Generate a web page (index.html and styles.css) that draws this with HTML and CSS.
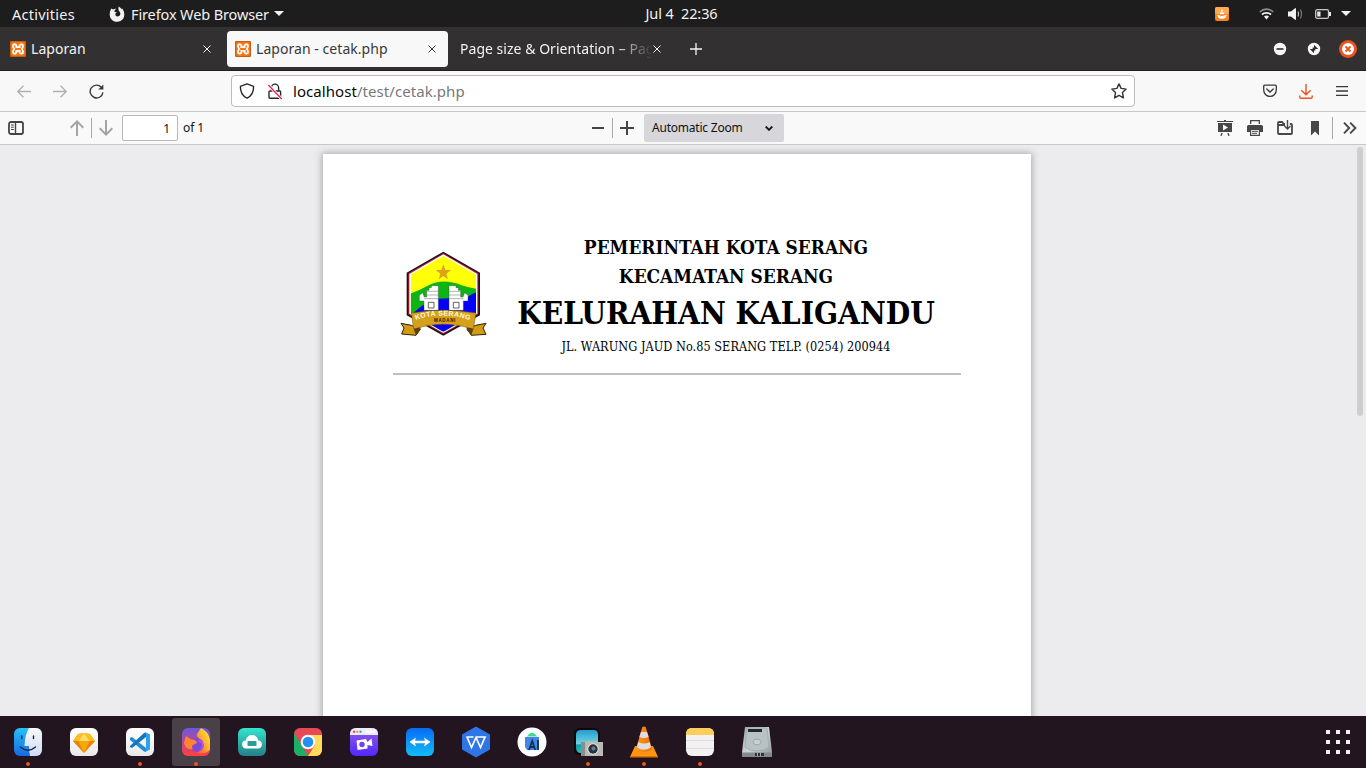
FILE: index.html
```html
<!DOCTYPE html>
<html lang="en">
<head>
<meta charset="utf-8">
<title>Laporan - cetak.php</title>
<link rel="stylesheet" href="styles.css">
</head>
<body>
<svg class="defs" width="0" height="0">
  <defs>
    <symbol id="xampp" viewBox="0 0 16 16"><rect width="16" height="16" rx="1" fill="#c9600f"/><rect x="1" y="1" width="14" height="14" rx="2" fill="#fb7410"/><path d="M3.2 3.9Q5.3 2.4 6.4 4.4L6.3 6.2H9.7L9.6 4.4Q10.7 2.4 12.8 3.9 13.6 6 11.8 8 13.6 10 12.8 12.1 10.7 13.6 9.6 11.6L9.7 9.8H6.3L6.4 11.6Q5.3 13.6 3.2 12.1 2.4 10 4.2 8 2.4 6 3.2 3.9Z" fill="none" stroke="#fff" stroke-width="1.8"/></symbol>
    <symbol id="close" viewBox="0 0 8 8"><path d="M.5.5 7.5 7.5M7.5.5.5 7.5" stroke="currentColor" stroke-width="1"/></symbol>
    <symbol id="caret" viewBox="0 0 10 5"><path d="M0 0H10L5 5Z" fill="#f2f2f2"/></symbol>
    <linearGradient id="finder" x1="0" y1="0" x2="0" y2="1"><stop stop-color="#27c0f7"/><stop offset="1" stop-color="#1769e2"/></linearGradient>
    <linearGradient id="finderLight" x1="0" y1="0" x2="0" y2="1"><stop stop-color="#f7f9fc"/><stop offset="1" stop-color="#cfdcf3"/></linearGradient>
    <linearGradient id="paper" x1="0" y1="0" x2="0" y2="1"><stop stop-color="#fff"/><stop offset="1" stop-color="#e9e9ea"/></linearGradient>
    <linearGradient id="fox" x1="0" y1="0" x2="0" y2="1"><stop stop-color="#6b59dc"/><stop offset=".55" stop-color="#bd4891"/><stop offset="1" stop-color="#ff403c"/></linearGradient>
    <linearGradient id="flame" x1="1" y1="0" x2="0" y2="1"><stop stop-color="#fff04a"/><stop offset=".45" stop-color="#ffb52f"/><stop offset="1" stop-color="#ff423d"/></linearGradient>
    <linearGradient id="teal" x1="0" y1="0" x2="0" y2="1"><stop stop-color="#34e5ce"/><stop offset="1" stop-color="#247f88"/></linearGradient>
    <linearGradient id="violet" x1="0" y1="0" x2="0" y2="1"><stop stop-color="#925be4"/><stop offset="1" stop-color="#5229ff"/></linearGradient>
    <linearGradient id="azure" x1="0" y1="0" x2="0" y2="1"><stop stop-color="#086bf5"/><stop offset="1" stop-color="#11bdf5"/></linearGradient>
    <linearGradient id="sea" x1="0" y1="0" x2="0" y2="1"><stop stop-color="#239dd2"/><stop offset=".6" stop-color="#70d3e3"/><stop offset=".65" stop-color="#119ba8"/><stop offset="1" stop-color="#35c0b4"/></linearGradient>
    <linearGradient id="cone" x1="0" y1="0" x2="1" y2="0"><stop stop-color="#ff9a1e"/><stop offset="1" stop-color="#ee6900"/></linearGradient>
    <linearGradient id="steel" x1="0" y1="0" x2="1" y2="1"><stop stop-color="#9ca7aa"/><stop offset=".5" stop-color="#cbd3d5"/><stop offset="1" stop-color="#8c9799"/></linearGradient>
    <clipPath id="round"><rect width="28" height="28" rx="6"/></clipPath>
  </defs>
</svg>

<header class="topbar">
  <div class="top-left">
    <span class="t activities">Activities</span>
    <svg class="fox-mono" width="16" height="16" viewBox="0 0 16 16"><path d="M2.3 2.5 4 3.6C5.1 2.8 6.3 2.7 7.2 2.9 5.7 3.7 5.2 5 5.6 6.1L7.8 6.3 6.3 7.7C6.2 9.5 7.2 10.6 8.8 10.4 11.5 10 12 7.3 10.5 5.5 9.5 4.4 9 3 9.8.3 10.7 1.7 12 2.1 13 3.4L13.2 2.3C18 9.5 14 15.8 8.2 15.8 1.3 15.8-1.3 8.7 2.3 2.5Z" fill="#f2f2f2"/></svg>
    <span class="t appname">Firefox Web Browser</span>
    <svg width="10" height="5"><use href="#caret"/></svg>
  </div>
  <div class="t clock">Jul 4&nbsp; 22:36</div>
  <div class="top-right">
    <svg class="tray" width="14" height="14" viewBox="0 0 14 14"><rect width="14" height="14" rx="2" fill="#f58320"/><rect width="14" height="7" rx="2" fill="#ffab54"/><path d="M6.5 2.5H7.5L8.1 4.3H5.9ZM5.4 5.2H8.6L9.2 7.2H4.8Z" fill="#fff"/><path d="M2.7 8.4Q3 11.3 7 11.3T11.3 8.4Q7 11 2.7 8.4Z" fill="#fff" stroke="#fff"/></svg>
    <svg class="wifi" width="15" height="12" viewBox="0 0 15 12" fill="none"><path d="M.8 4C4.5.2 10.5.2 14.2 4" stroke="#8a8a8a" stroke-width="1.6"/><path d="M3 6.5C5.5 4.2 9.5 4.2 12 6.5" stroke="#f2f2f2" stroke-width="1.8"/><path d="M5 8.5C6.4 7.2 8.6 7.2 10 8.5L7.5 11.5Z" fill="#f2f2f2"/></svg>
    <svg class="sound" width="15" height="12" viewBox="0 0 15 12" fill="none"><path d="M0 3.5H3L7 .3H8V11.7H7L3 8.5H0Z" fill="#f2f2f2"/><path d="M10 3.5Q11.2 6 10 8.5" stroke="#bbb" stroke-width="1.2"/><path d="M12.4 1.5Q14.6 6 12.4 10.5" stroke="#777" stroke-width="1.2"/></svg>
    <svg class="battery" width="16" height="10" viewBox="0 0 16 10"><rect x=".7" y=".7" width="12.8" height="8.6" rx="1.5" fill="none" stroke="#c9c9c9" stroke-width="1.3"/><path d="M14 3H16V7H14ZM2.2 2.5H5.5V7.5H2.2Z" fill="#e9e9e9"/></svg>
    <svg width="10" height="5"><use href="#caret"/></svg>
  </div>
</header>

<nav class="tabs">
  <div class="tab first"><svg width="16" height="16"><use href="#xampp"/></svg><span class="t title">Laporan</span><svg class="x" width="8" height="8"><use href="#close"/></svg></div>
  <div class="tab active"><svg width="16" height="16"><use href="#xampp"/></svg><span class="t title">Laporan - cetak.php</span><svg class="x" width="8" height="8"><use href="#close"/></svg></div>
  <div class="tab third"><span class="t title">Page size &amp; Orientation – Pag</span><svg class="x" width="8" height="8"><use href="#close"/></svg></div>
  <svg class="newtab" width="12" height="12" viewBox="0 0 12 12"><path d="M6 0V12M0 6H12" stroke="#f5f5f5" stroke-width="1.3"/></svg>
  <div class="window">
    <svg width="18" height="18" viewBox="0 0 18 18"><circle cx="9" cy="9" r="6.2" fill="#f8f8f8"/><path d="M5.5 9H12.5" stroke="#444" stroke-width="1.8"/></svg>
    <svg width="18" height="18" viewBox="0 0 18 18"><circle cx="9" cy="9" r="6.2" fill="#f8f8f8"/><path d="M9 4.8 13.2 9H9ZM4.8 9H9V13.2ZM7.6 7.6H10.4V10.4H7.6Z" fill="#323031"/></svg>
    <svg width="18" height="18" viewBox="0 0 18 18"><circle cx="9" cy="9" r="9" fill="#e95420"/><circle cx="9" cy="9" r="6" fill="#fff"/><path d="M6.5 6.5 11.5 11.5M11.5 6.5 6.5 11.5" stroke="#e95420" stroke-width="1.8"/></svg>
  </div>
</nav>

<div class="navbar">
  <svg class="back" width="14" height="13" viewBox="0 0 14 13" fill="none" stroke="#b0b0b2" stroke-width="1.3"><path d="M14 6.5H.8M6.5.7.7 6.5 6.5 12.3"/></svg>
  <svg class="forward" width="14" height="13" viewBox="0 0 14 13" fill="none" stroke="#b0b0b2" stroke-width="1.3"><path d="M0 6.5H13.2M7.5.7 13.3 6.5 7.5 12.3"/></svg>
  <svg class="reload" width="15" height="15" viewBox="0 0 15 15"><path d="M12.3 3.2A6.4 6.4 0 1 0 13.9 8.3" fill="none" stroke="#38383b" stroke-width="1.4"/><path d="M14.4.5V5.5H9.3Z" fill="#38383b"/></svg>
  <div class="urlbox">
    <svg width="16" height="16" viewBox="0 0 16 16"><path d="M8 .8 14.6 3.3C14.8 9.2 12.8 12.9 8 15.2 3.2 12.9 1.2 9.2 1.4 3.3Z" fill="none" stroke="#28282b" stroke-width="1.4" stroke-linejoin="round"/></svg>
    <svg class="lock" width="16" height="17" viewBox="0 0 16 17" fill="none"><path d="M4.4 8V4.7A3.6 3.6 0 0 1 11.6 4.7V8M3 8H13Q13.6 8 13.6 9V14.3Q13.6 15.3 12.8 15.3H3Q2 15.3 2 14.3V9Q2 8 3 8Z" stroke="#28282b" stroke-width="1.4"/><path d="M1.3 2 14.7 16" stroke="#fff" stroke-width="3"/><path d="M1.3 2 14.7 16" stroke="#e22850" stroke-width="1.3"/></svg>
    <span class="t url"><b>localhost</b>/test/cetak.php</span>
    <svg class="star" width="16" height="16" viewBox="0 0 16 16"><path d="M8 .9 10.1 5.4 15.1 6.1 11.5 9.6 12.4 14.9 8 12.4 3.6 14.9 4.5 9.6.9 6.1 5.9 5.4Z" fill="none" stroke="#333" stroke-width="1.4" stroke-linejoin="round"/></svg>
  </div>
  <svg class="pocket" width="14" height="14" viewBox="0 0 14 14" fill="none" stroke="#38383b" stroke-width="1.3" stroke-linecap="round"><path d="M1.8 1.2H12.2Q13.3 1.2 13.3 2.3V5.7C13.3 14.6.7 14.6.7 5.7V2.3Q.7 1.2 1.8 1.2Z"/><path d="M3.8 5 7 8 10.2 5"/></svg>
  <svg class="download" width="14" height="15" viewBox="0 0 14 15" fill="none" stroke="#e95420" stroke-width="1.4"><path d="M7 0V10.5M2.3 6.2 7 10.8 11.7 6.2M.8 11.5V13Q.8 14.2 2 14.2H12Q13.2 14.2 13.2 13V11.5"/></svg>
  <svg class="menu" width="12" height="10" viewBox="0 0 12 10"><path d="M0 .5H12M0 5H12M0 9.5H12" stroke="#38383b" stroke-width="1.3"/></svg>
</div>

<div class="pdfbar">
  <div class="pdf-left">
    <svg width="16" height="14" viewBox="0 0 16 14" fill="none" stroke="#444"><rect x="1" y="1" width="14" height="12" rx="2" stroke-width="1.8"/><path d="M7.5 1V13" stroke-width="1.4"/><path d="M3 4H5.8M3 6.2H5.8M3 8.5H5.8" stroke-width="1"/></svg>
    <svg class="up" width="14" height="16" viewBox="0 0 14 16" fill="none" stroke="#a4a4a5" stroke-width="2"><path d="M7 16V2M.7 7.7 7 1.4 13.3 7.7"/></svg>
    <i class="sep"></i>
    <svg class="down" width="14" height="16" viewBox="0 0 14 16" fill="none" stroke="#a4a4a5" stroke-width="2"><path d="M7 0V14M.7 8.3 7 14.6 13.3 8.3"/></svg>
    <div class="t pagebox">1</div>
    <span class="t of">of 1</span>
  </div>
  <div class="pdf-mid">
    <svg width="12" height="2"><rect width="12" height="2" fill="#444"/></svg>
    <i class="sep"></i>
    <svg width="14" height="14" viewBox="0 0 14 14"><path d="M7 0V14M0 7H14" stroke="#444" stroke-width="2"/></svg>
    <div class="t select"><span class="zoomtext">Automatic Zoom</span><svg width="8" height="5" viewBox="0 0 8 5"><path d="M.7.5 4 3.8 7.3.5" fill="none" stroke="#151518" stroke-width="1.9"/></svg></div>
  </div>
  <div class="pdf-right">
    <svg width="16" height="16" viewBox="0 0 16 16" fill="#474747"><path d="M0 1H7V0H9V1H16V2H0ZM1 3H15V12H1Z"/><path d="M6 4.5V10.5L11 7.5Z" fill="#f9f9fa"/><path d="M5 13 4 16M11 13 12 16" stroke="#474747" stroke-width="1.3"/></svg>
    <svg width="16" height="16" viewBox="0 0 16 16" fill="#474747"><path d="M3 0H13V4H3ZM1.5 5H14.5Q16 5 16 6.5V12H0V6.5Q0 5 1.5 5ZM3 9H13V16H3Z"/><path d="M4.3 1.3H11.7V5H4.3ZM4.2 10H11.8V14.7H4.2Z" fill="#f9f9fa"/><path d="M5 11.3H11M5 13.3H10" stroke="#474747"/></svg>
    <svg width="16" height="16" viewBox="0 0 16 16" fill="none" stroke="#474747"><path d="M8 4H6.8L5 2H2Q1 2 1 3V13Q1 14 2 14H14Q15 14 15 13V5Q15 4 14 4H12.8M1 5H8" stroke-width="1.8"/><path d="M10.5 0V9M7.5 6 10.5 9 13.5 6" stroke-width="1.4"/></svg>
    <svg width="16" height="16" viewBox="0 0 16 16"><path d="M4 1H12V15.5L8 11.5 4 15.5Z" fill="#474747"/></svg>
    <i class="sep"></i>
    <svg class="more" width="14" height="12" viewBox="0 0 14 12"><path d="M1 .7 6.2 6 1 11.3M7.2.7 12.4 6 7.2 11.3" fill="none" stroke="#474747" stroke-width="1.9"/></svg>
  </div>
</div>

<main class="viewer">
  <article class="page">
    <div class="letterhead">
      <svg class="emblem" width="88" height="86" viewBox="30 33 264 258">
        <defs><clipPath id="hex"><path d="M160 48 258 104V219L160 275 62 219V104Z"/></clipPath><path id="arc" d="M77 240Q160 212 246 243"/></defs>
        <path d="M160 35 270 98V226L160 287 50 226V98Z" fill="#17131e"/>
        <path d="M160 40 265 100V223L160 282 55 223V100Z" fill="#c51a30"/>
        <path d="M160 43 262 102V221L160 279 58 221V102Z" fill="#fff"/>
        <g clip-path="url(#hex)"><path d="M50 40H270V290H50Z" fill="#ffff08"/><path d="M50 164Q85 154 110 139Q155 112 215 136Q240 145 270 147V290H50Z" fill="#0cb414"/><path d="M60 232Q90 190 145 176Q200 172 225 180Q240 160 270 155V290H50Z" fill="#0500fa"/></g>
        <path d="M160 73 166 90H183L169 101 174 118 160 108 146 118 151 101 137 90H154Z" fill="#daa21d"/>
        <g fill="#fff" stroke="#444" stroke-width="1.2"><path d="M124 137H145V211H102V183H88V166L98 158 103 171H110V151H117V143H124Z"/><path d="M198 137H177V211H220V183H234V166L224 158 219 171H212V151H205V143H198Z"/></g>
        <path d="M112 154H145M108 165H145M102 176H145M177 154H210M177 165H214M177 176H220" stroke="#666" stroke-width="1.5"/>
        <path d="M115 187H132V204H115ZM190 187H207V204H190Z" fill="#fff" stroke="#444" stroke-width="2.5"/>
        <path d="M64 256 33 250 42 264 35 282 78 286 91 267ZM257 256 288 250 279 264 288 283 244 286 232 267Z" fill="#d29b12" stroke="#282008" stroke-width="3"/>
        <path d="M64 219Q160 202 258 219L250 267Q160 238 71 267Z" fill="#d5a01a" stroke="#6b4e0a" stroke-width="1.5"/>
        <path d="M71 267 91 262V270L78 286ZM250 267 230 262V270L244 286Z" fill="#5c410b"/>
        <text class="motto"><textPath href="#arc" textLength="165">KOTA SERANG</textPath></text>
        <text class="madani" x="132" y="246" textLength="64">MADANI</text>
      </svg>
      <div class="heading">
        <div class="h1">PEMERINTAH KOTA SERANG</div>
        <div class="h2">KECAMATAN SERANG</div>
        <div class="h3">KELURAHAN KALIGANDU</div>
        <div class="addr">JL. WARUNG JAUD No.85 SERANG TELP. (0254) 200944</div>
      </div>
    </div>
  </article>
  <i class="scroll"></i>
</main>

<footer class="dock">
  <div class="cell run"><svg width="28" height="28" viewBox="0 0 28 28"><g clip-path="url(#round)"><path d="M0 0H28V28H0Z" fill="url(#finder)"/><path d="M15 0H28V28H16Q15 22 15 18H10.5Q11 6 15 0Z" fill="url(#finderLight)"/></g><path d="M7.7 8V10.5M19.5 8V10.5M6.3 19Q14 25.5 21.5 19" fill="none" stroke="#14253d" stroke-width="1.4" stroke-linecap="round"/></svg></div>
  <div class="cell"><svg width="28" height="28" viewBox="0 0 28 28"><rect width="28" height="28" rx="6" fill="url(#paper)"/><path d="M8 6 14 5 20 6 25 13 14 25 3 13Z" fill="#f8a900"/><path d="M8 6 14 5 8.5 13H3ZM20 6 14 5 19.5 13H25Z" fill="#fdbd1d"/><path d="M14 5 19.5 13H8.5Z" fill="#fddb68"/><path d="M3 13H8.5L14 25ZM25 13H19.5L14 25Z" fill="#e98410"/></svg></div>
  <div class="cell run"><svg width="28" height="28" viewBox="0 0 28 28"><rect width="28" height="28" rx="6" fill="url(#paper)"/><path d="M4 10 6 9 20 20V24L18 23.5 4 12Z" fill="#2489d0"/><path d="M4 18 18 5 20 4.5V9L6 20 4 19Z" fill="#1474bd"/><path d="M19 4 24 6.5V21.5L19 24Q20 22 20 20V8Q20 6 19 4Z" fill="#2fa2ef"/></svg></div>
  <div class="cell run current"><svg width="28" height="28" viewBox="0 0 28 28"><g clip-path="url(#round)"><path d="M0 0H28V28H0Z" fill="url(#fox)"/><path d="M19 0Q27 4 28 12V22Q22 27 14 25 22 20 19 12 14 9 15 6Z" fill="url(#flame)"/><circle cx="15" cy="17" r="6.8" fill="#7f46dc"/><path d="M2 15 4 8 9 11.5Q14 11 15 15L11 17Q9 18 11 21 6 22 3 18Z" fill="#ff862e"/><path d="M14 14Q18 12 20 16 21 20 16 23 23 21 21 14 18 10 14 14Z" fill="#b555f0"/></g></svg></div>
  <div class="cell"><svg width="28" height="28" viewBox="0 0 28 28"><rect width="28" height="28" rx="6" fill="url(#teal)"/><path d="M8.5 20.5A4 4 0 0 1 7.8 12.5Q9 7 14 7T20.2 12.5A4 4 0 0 1 19.5 20.5Z" fill="#fff"/><rect x="9.5" y="13" width="9" height="5" rx=".8" fill="#2d9b9c"/></svg></div>
  <div class="cell"><svg width="28" height="28" viewBox="0 0 28 28"><g clip-path="url(#round)"><path d="M0 0H28V28H0Z" fill="#e94856"/><path d="M0 5 8 18 14 28H0Z" fill="#1caf66"/><path d="M14 7H28V28H14L21 17Z" fill="#ffdb58"/></g><circle cx="14" cy="14" r="7.3" fill="#fff"/><circle cx="14" cy="14" r="5.3" fill="#2491ee"/></svg></div>
  <div class="cell"><svg width="28" height="28" viewBox="0 0 28 28"><rect width="28" height="28" rx="6" fill="url(#violet)"/><path d="M0 7V6Q0 0 6 0H22Q28 0 28 6V7Z" fill="#eceafb"/><g><circle cx="4" cy="3.8" r="1.2" fill="#ed4b65"/><circle cx="7.2" cy="3.8" r="1.2" fill="#eca43d"/><circle cx="10.5" cy="3.8" r="1.2" fill="#35bd91"/></g><rect x="15" y="2.5" width="10" height="2.5" rx="1" fill="#fff"/><path d="M6.5 12.5 16 11 17.5 14 21.5 10.5 22.5 18 17.5 17 17.5 20.5 7.5 22Z" fill="#fff"/><circle cx="12" cy="16.5" r="2.7" fill="#7040e8"/></svg></div>
  <div class="cell"><svg width="28" height="28" viewBox="0 0 28 28"><rect width="28" height="28" rx="6" fill="url(#azure)"/><path d="M3.5 14 10 9.5 9 12.8H19L18 9.5 24.5 14 18 18.5 19 15.2H9L10 18.5Z" fill="#fff"/></svg></div>
  <div class="cell"><svg width="28" height="32" viewBox="0 0 28 32"><path d="M14 .5 28 8.5V23.5L14 31.5 0 23.5V8.5Z" fill="#2e75e8"/><path d="M4.3 11H11.5M5 11 9.5 21.5 14 11.5 18.5 21.5 23 11H14" fill="none" stroke="#fff" stroke-width="1.7"/></svg></div>
  <div class="cell"><svg width="30" height="30" viewBox="0 0 30 30"><circle cx="15" cy="15" r="14.5" fill="#fff"/><path d="M8 10H22V23H10L8 20Z" fill="#4285ec"/><path d="M10 9.5Q15 2 20 9.5Z" fill="#3ddc84"/><path d="M12 23 15.2 14 18.2 23M13 20H17.5M21 13V23" fill="none" stroke="#123348" stroke-width="1.8"/></svg></div>
  <div class="cell run"><svg width="30" height="28" viewBox="0 0 30 28"><rect x="1" width="26" height="27" rx="6" fill="#07090c"/><path d="M3 7Q3 2 8 2H21Q25 2 25 7V25H8Q3 25 3 19Z" fill="url(#sea)"/><path d="M8 14H13L14 13H24L25 14H30V28H8Z" fill="#b9b9b6"/><path d="M8 14H12V28H8Z" fill="#888d8e"/><circle cx="20" cy="21" r="5.7" fill="#e4e4df"/><circle cx="20" cy="21" r="4.7" fill="#27343f"/><circle cx="20.5" cy="20.5" r="2" fill="#657e95"/></svg></div>
  <div class="cell run"><svg width="28" height="32" viewBox="0 0 28 32"><path d="M5 20H23L28 31H0Z" fill="#ff9413"/><path d="M0 30H28V31.5H0Z" fill="#d97400"/><path d="M12.3 1Q14 0 15.7 1L22 23Q14 29 6 23Z" fill="url(#cone)"/><path d="M11 6H17L18.7 11Q14 13 9.3 11ZM8.3 16Q14 19 19.7 16L21 21.5Q14 26 7 21.5Z" fill="#dedede"/></svg></div>
  <div class="cell run"><svg width="28" height="28" viewBox="0 0 28 28"><rect width="28" height="28" rx="6" fill="#f3f1f2"/><path d="M0 7V6Q0 0 6 0H22Q28 0 28 6V7Z" fill="#fbcf59"/><path d="M0 12.5H28M0 20.5H28" stroke="#dddcdd"/></svg></div>
  <div class="cell"><svg class="disk" width="30" height="30" viewBox="0 0 30 30"><path d="M3 0H27L30 25V30H0V25Z" fill="url(#steel)"/><path d="M5 1H25L27 20Q23 24 15 24T3 20Z" fill="#b8c2c5" stroke="#a3adb0"/><path d="M6 2H20V5H6Z" fill="#20292e"/><ellipse cx="15" cy="15" rx="4" ry="2.8" fill="#c8d0d2" stroke="#a0aaad"/><path d="M0 25.5H30V30H0Z" fill="#858b8d"/><path d="M13 26H22V29H13Z" fill="#333"/><path d="M15 26H16V29H15ZM18 26H19V29H18Z" fill="#aaa"/></svg></div>
  <div class="apps"><i></i><i></i><i></i><i></i><i></i><i></i><i></i><i></i><i></i></div>
</footer>
</body>
</html>
```
FILE: styles.css
```css
* { box-sizing: border-box; }
body { margin: 0; width: 1366px; height: 768px; overflow: hidden; display: flex; flex-direction: column; font-family: "Noto Sans", "Open Sans", sans-serif; font-size: 14px; background: #ececee; }
svg { display: block; flex: none; }
.defs { position: absolute; }
.t { white-space: nowrap; line-height: 20px; flex: none; }
.topbar { height: 27px; background: #1d1d1d; color: #f2f2f2; display: grid; grid-template-columns: 1fr auto 1fr; align-items: center; padding: 0 15px 0 12px; }
.top-left, .top-right { display: flex; align-items: center; }
.top-right { justify-content: flex-end; }
.activities { width: 97px; font-size: 14.5px; letter-spacing: .25px; }
.appname { width: 143px; margin-left: 6px; font-size: 14.5px; letter-spacing: -.12px; }
.clock { font-size: 14.5px; letter-spacing: -.1px; padding: 0 0 2px; }
.wifi { margin-left: 30px; }
.sound { margin-left: 14px; }
.battery { margin: 0 10px 0 12px; }
.tabs { height: 44px; background: #323031; border-bottom: 1px solid #1e1c1d; color: #f2f2f2; display: flex; align-items: center; padding-right: 9px; }
.tab { display: flex; align-items: center; height: 36px; padding: 0 12px 0 8px; }
.tab .title { flex: 1; margin-left: 5px; padding-top: 1px; min-width: 0; letter-spacing: .05px; }
.first { width: 225px; margin-left: 2px; padding-right: 16px; }
.active { width: 221px; background: #f8f8f8; color: #38383b; border-radius: 4px; }
.third { width: 225px; }
.third .title { margin-left: 4px; letter-spacing: .03px; -webkit-mask-image: linear-gradient(90deg, #000 80%, transparent); mask-image: linear-gradient(90deg, #000 80%, transparent); }
.newtab { margin-left: 17px; }
.window { display: flex; gap: 16px; margin-left: auto; }
.navbar { height: 41px; background: #f8f8f8; border-bottom: 1px solid #c8c8c9; display: flex; align-items: center; padding: 0 18px 0 17px; }
.forward { margin-left: 22px; }
.reload { margin-left: 22px; }
.urlbox { width: 904px; height: 32px; margin-left: 127px; border: 1px solid #bcbcbd; border-radius: 4px; background: #fff; display: flex; align-items: center; padding: 0 7px; }
.lock { margin-left: 12px; }
.url { margin-left: 10px; color: #78787b; font-size: 15px; letter-spacing: .06px; }
.url b { font-weight: 400; color: #08080a; }
.star { margin-left: auto; }
.pocket { margin-left: auto; }
.download { margin-left: 22px; }
.menu { margin-left: 23px; }
.pdfbar { height: 33px; background: #f9f9fa; border-bottom: 1px solid #c8c8c9; display: grid; grid-template-columns: 591px 193px 1fr; align-items: center; font-size: 12px; color: #111; }
.pdf-left, .pdf-mid, .pdf-right { display: flex; align-items: center; }
.pdf-left { padding-left: 8px; }
.sep { width: 1px; height: 20px; background: #ababac; }
.up { margin: 0 7px 0 46px; }
.down { margin: 0 9px 0 7px; }
.pagebox { width: 56px; height: 26px; border: 1px solid #b8b8bb; border-radius: 2px; background: #fff; text-align: right; padding: 3px 7px 0 0; }
.of { margin-left: 5px; letter-spacing: -.1px; }
.pdf-mid { padding-left: 1px; }
.pdf-mid .sep { margin: 0 7px 0 8px; }
.select { width: 140px; height: 28px; margin-left: 10px; background: #d7d7db; border-radius: 2px; display: flex; align-items: center; justify-content: space-between; padding: 0 11px 0 8px; letter-spacing: -.22px; }
.pdf-right { justify-content: flex-end; gap: 14px; padding-right: 9px; }
.pdf-right .sep { height: 22px; margin-left: -5px; }
.more { margin-left: -4px; }
.viewer { height: 571px; overflow: hidden; background: #ececee; display: flex; padding: 9px 3px 0 323px; }
.page { width: 708px; height: 600px; background: #fff; box-shadow: 0 0 7px 1px #a8a8aa; padding: 80px 70px 0; flex: none; }
.letterhead { height: 141px; border-bottom: 2px solid #c0c0c0; display: flex; }
.emblem { margin: 17px 3px 0 7px; }
.heading { flex: 1; margin-top: -2px; text-align: center; font-family: "DejaVu Serif Condensed", "DejaVu Serif", serif; font-stretch: condensed; color: #000; white-space: nowrap; }
.heading div { display: flex; justify-content: center; align-items: center; }
.h1, .h2 { height: 29px; font-size: 18.9px; font-weight: 700; }
.h3 { height: 46px; font-size: 31.4px; font-weight: 700; }
.addr { height: 21px; font-size: 12.6px; letter-spacing: .03px; }
.motto, .madani { font-family: "Liberation Sans", Arial, sans-serif; font-weight: 700; }
.motto { font-size: 21px; fill: #fffbe4; }
.madani { font-size: 13.5px; fill: #211602; }
.scroll { width: 6px; height: 269px; border-radius: 3px; background: #cecece; margin: -7px 0 0 auto; }
.dock { height: 52px; background: #22151f; display: flex; align-items: center; padding-right: 16px; }
.cell { position: relative; width: 48px; height: 48px; margin: 0 4px; border-radius: 3px; display: flex; align-items: center; justify-content: center; }
.current { background: #4a4047; }
.disk { margin-left: 1px; }
.run::after { content: ""; position: absolute; left: 22px; top: 44px; width: 4px; height: 4px; border-radius: 50%; background: #e95420; }
.apps { margin-left: auto; display: grid; grid-template-columns: repeat(3, 4px); gap: 6px; }
.apps i { height: 4px; background: #f3f2ef; }
```
